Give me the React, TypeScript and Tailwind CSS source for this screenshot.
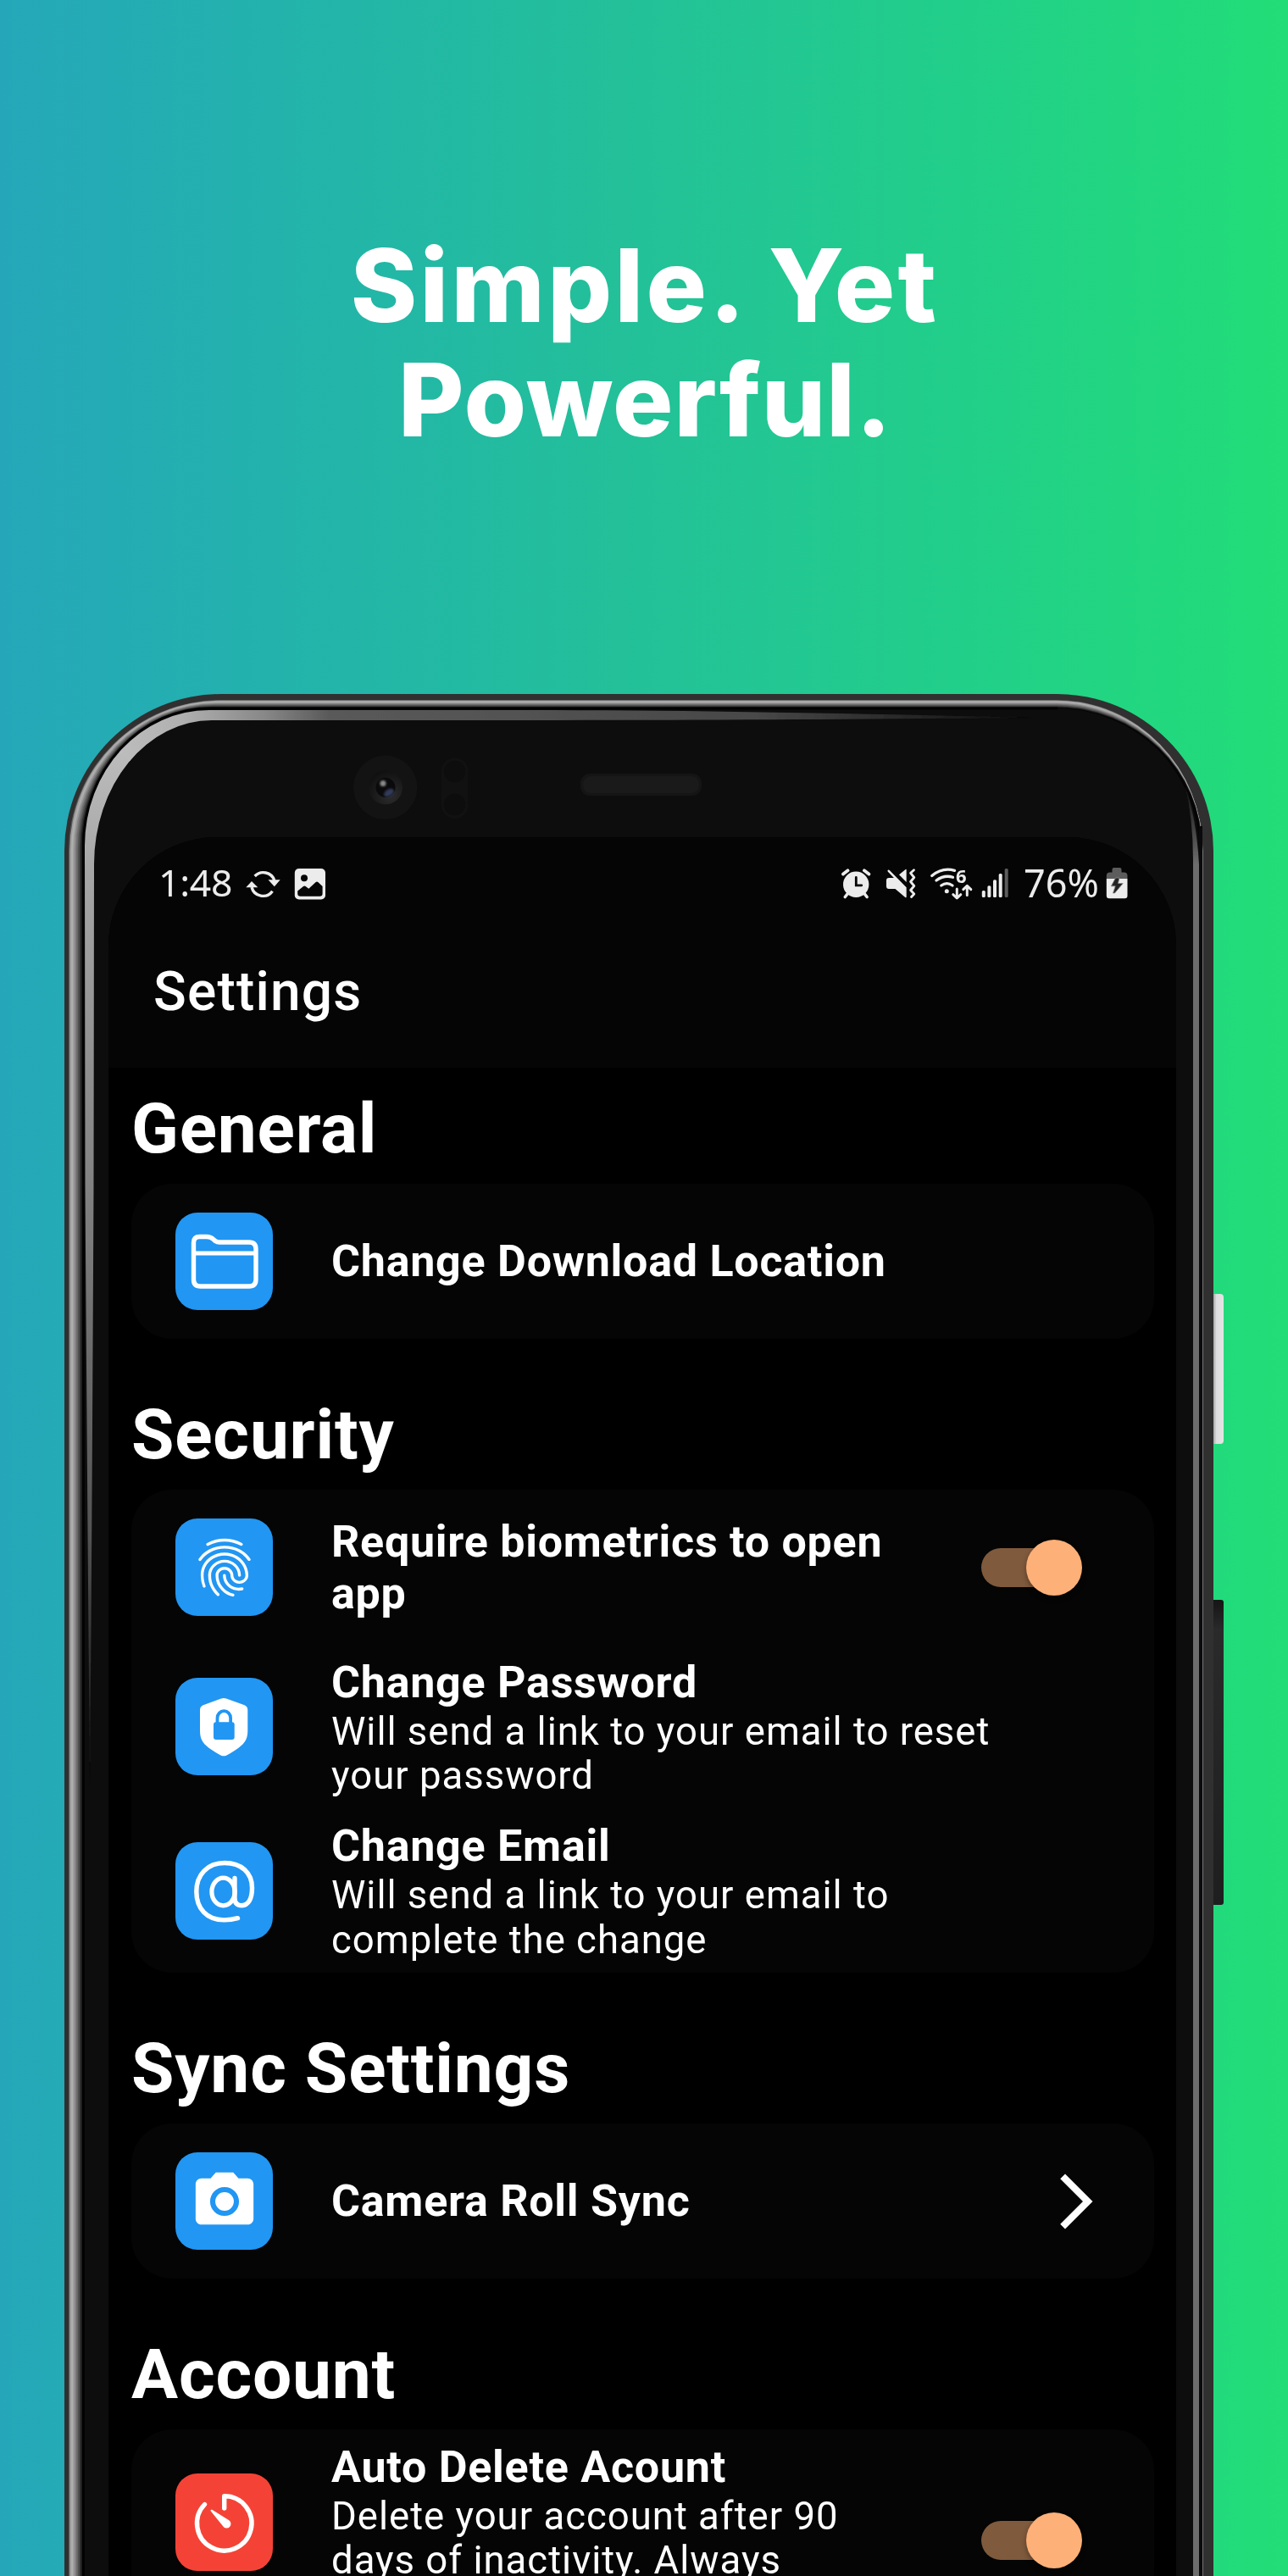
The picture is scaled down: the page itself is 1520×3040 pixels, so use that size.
import type { ReactNode } from "react";
import { MdArrowForwardIos, MdCameraAlt, MdFingerprint } from "react-icons/md";

/* ---------- Device body ---------- */

function framePath(left: number, top: number, right: number, cxL = 261, cy = 1004) {
  const cxR = 1247;
  return `M${left} 3060 V${cy} A${cxL - left} ${cy - top} 0 0 1 ${cxL} ${top} H${cxR} A${right - cxR} ${cy - top} 0 0 1 ${right} ${cy} V3060 Z`;
}

const rimStops: { t: number; c: string }[] = [
  { t: 0, c: "#5c5c5c" },
  { t: 0.08, c: "#a0a0a0" },
  { t: 0.2, c: "#b0b0b0" },
  { t: 0.32, c: "#9c9c9c" },
  { t: 0.44, c: "#848484" },
  { t: 0.56, c: "#6c6c6c" },
  { t: 0.68, c: "#525252" },
  { t: 0.8, c: "#363636" },
  { t: 0.9, c: "#1c1c1c" },
  { t: 1, c: "#050505" },
];

const reflection =
  "M106 2110 Q102.500 1700 100.500 1400 L100 998 A147 160 0 0 1 247 838 H620 C820 838 1000 842 1220 847 C1000 849 850 850 620 850 H250 A139 170 0 0 0 111 1020 L110.500 1400 Q108 1900 106 2110 Z";

function DeviceBody() {
  return (
    <svg className="pointer-events-none absolute left-0 top-0" width="1356" height="2221" viewBox="76 819 1356 2221" fill="none">
      <defs>
        <linearGradient id="sideGlow" gradientUnits="userSpaceOnUse" x1="0" y1="880" x2="0" y2="2110">
          <stop offset="0" stopColor="#bdbdbd" />
          <stop offset="0.12" stopColor="#a6a6a6" />
          <stop offset="0.4" stopColor="#858585" />
          <stop offset="0.75" stopColor="#555" />
          <stop offset="1" stopColor="#0d0d0d" />
        </linearGradient>
        <linearGradient id="topGlow" gradientUnits="userSpaceOnUse" x1="140" y1="0" x2="1215" y2="0">
          <stop offset="0" stopColor="#bdbdbd" />
          <stop offset="0.07" stopColor="#b0b0b0" />
          <stop offset="0.16" stopColor="#888" />
          <stop offset="0.23" stopColor="#5a5a5a" />
          <stop offset="0.7" stopColor="#484848" />
          <stop offset="1" stopColor="#0d0d0d" />
        </linearGradient>
        <linearGradient id="rightGlow" gradientUnits="userSpaceOnUse" x1="0" y1="925" x2="0" y2="1020">
          <stop offset="0" stopColor="#0d0d0d" />
          <stop offset="1" stopColor="#6d6d6d" />
        </linearGradient>
        <clipPath id="topPart">
          <path d="M74 819 L250 995 H1300 V819 Z" />
        </clipPath>
        <clipPath id="sidePart">
          <path d="M74 817.500 L252 995.500 V3060 H74 Z" />
        </clipPath>
        <radialGradient id="lensRing" cx="0.65" cy="0.75" r="0.8">
          <stop offset="0" stopColor="#2c2c2c" />
          <stop offset="1" stopColor="#0f0f0f" />
        </radialGradient>
        <filter id="soft" x="-0.5" y="-0.5" width="2" height="2">
          <feGaussianBlur stdDeviation="1.2" />
        </filter>
        <filter id="edge" x="-0.1" y="-0.1" width="1.2" height="1.2">
          <feGaussianBlur stdDeviation="0.6" />
        </filter>
      </defs>

      <path d={framePath(76, 819, 1432)} fill="#303030" />
      {rimStops.map(({ t, c }) => (
        <path key={t} d={framePath(81 + 16 * t, 826 + 9 * t, 1419.5 - 1.5 * t, 261 - 13 * t, 1004 - 4 * t)} fill={c} />
      ))}
      <path d="M98.500 3060 V999 A149 163 0 0 1 247.500 836 H1248 A167 166 0 0 1 1415 1002 V3060 Z" fill="#0d0d0d" />
      <path d="M98.500 3060 V999 A149 163 0 0 1 247.500 836 H1248" stroke="#020202" strokeWidth="3" />

      <g filter="url(#edge)">
        <g clipPath="url(#sidePart)">
          <path d={reflection} fill="url(#sideGlow)" />
        </g>
        <g clipPath="url(#topPart)">
          <path d={reflection} fill="url(#topGlow)" />
        </g>
        <path d="M1398 925 Q1412 965 1415 1020 V3060 H1408 V1015 Q1408 965 1398 925 Z" fill="url(#rightGlow)" />
      </g>
      <path d="M1417 975 V3060" stroke="#0a0a0c" strokeWidth="4" />

      <circle cx="454.700" cy="929.300" r="37.700" fill="#131313" />
      <circle cx="455" cy="929.300" r="20" fill="url(#lensRing)" />
      <circle cx="455" cy="929.300" r="11.500" fill="#0a0a0c" />
      <ellipse cx="459" cy="935.500" rx="6.500" ry="4" transform="rotate(-32 459 935.500)" fill="#323b58" filter="url(#soft)" />
      <circle cx="452" cy="924.500" r="3.500" fill="#8a8a8a" filter="url(#soft)" />

      <rect x="520.700" y="894.300" width="32" height="71.700" rx="16" fill="#111" />
      <circle cx="536.700" cy="910.500" r="12.700" fill="#0d0d0d" />
      <circle cx="536.700" cy="949.500" r="12.700" fill="#0d0d0d" />
      <rect x="685" y="913" width="143" height="26" rx="11" fill="#151515" />
      <rect x="688" y="916" width="137" height="20" rx="9" fill="#1a1a1a" />
    </svg>
  );
}

/* ---------- Status bar ---------- */

const ink = "#ececec";

function SyncIcon() {
  return (
    <svg className="shrink-0" width="44" height="40" viewBox="288 1023 44 40" fill="none">
      <path d="M300.700 1034 A13.800 13.800 0 0 1 323.800 1039" stroke={ink} strokeWidth="3.400" />
      <path d="M316.500 1038.300 H330.700 L323.800 1046.200 Z" fill={ink} />
      <path d="M321.500 1051.700 A13.800 13.800 0 0 1 297 1047" stroke={ink} strokeWidth="3.400" />
      <path d="M290.300 1047.300 H304.300 L297 1040 Z" fill={ink} />
    </svg>
  );
}

function PictureIcon() {
  return (
    <svg className="ml-[15px] shrink-0" width="38" height="40" viewBox="347 1023 38 40" fill="none">
      <rect x="347.800" y="1025" width="36.200" height="36.500" rx="5" fill={ink} />
      <circle cx="359" cy="1036.300" r="4" fill="#050505" />
      <path d="M351.200 1051.600 L358 1046 Q359.500 1045 361 1046.200 L364.300 1048.800 L372.700 1041 Q374 1040.200 375.300 1041 L380.600 1046 V1054.500 Q380.600 1057.800 377.300 1057.800 H354.500 Q351.200 1057.800 351.200 1054.500 Z" fill="#050505" />
    </svg>
  );
}

function AlarmIcon() {
  return (
    <svg className="shrink-0" width="36" height="40" viewBox="992 1023 36 40" fill="none" strokeLinecap="round">
      <circle cx="1010.200" cy="1043.800" r="15.200" fill={ink} />
      <path d="M995 1031.500 L1000.500 1027.300 M1025.400 1031.500 L1019.900 1027.300" stroke={ink} strokeWidth="3.800" />
      <path d="M1000 1055 L997.300 1058.500 M1020.400 1055 L1023.100 1058.500" stroke={ink} strokeWidth="3.600" />
      <path d="M1010.300 1035.500 V1044.800 H1016.800" stroke="#050505" strokeWidth="2.800" />
    </svg>
  );
}

function MuteVibrateIcon() {
  return (
    <svg className="ml-4 shrink-0" width="38" height="40" viewBox="1044 1023 38 40" fill="none" strokeLinecap="round" strokeLinejoin="round">
      <path d="M1048.800 1027.800 L1068.500 1048" stroke={ink} strokeWidth="2.600" />
      <path d="M1061 1032.300 L1068.700 1026 Q1069.700 1025.500 1069.700 1026.800 V1041 Z" fill={ink} />
      <path d="M1046 1039 Q1046 1036 1049 1036 H1056 L1069.700 1049.300 V1058 Q1069.700 1060 1068 1058.700 L1056.500 1049 H1049 Q1046 1049 1046 1046 Z" fill={ink} />
      <path d="M1078.500 1026.700 L1074.600 1030.300 L1078.800 1035.500 L1074.600 1040.500 L1078.800 1045.500 L1074.600 1050.500 L1078.800 1055 L1075.500 1058.500" stroke={ink} strokeWidth="2.800" />
    </svg>
  );
}

function WifiIcon() {
  return (
    <div className="relative ml-4 h-[40px] w-[50px] shrink-0">
      <svg width="50" height="40" viewBox="1098 1023 50 40" fill="none" stroke={ink} strokeWidth="3.300" strokeLinecap="round" strokeLinejoin="round">
        <path d="M1099.800 1033.500 Q1112 1023.300 1126.500 1027.300" />
        <path d="M1105 1039 Q1114.500 1032 1124.500 1035.300" />
        <path d="M1110.800 1045 Q1117.500 1040.300 1124 1045" />
        <circle cx="1117.300" cy="1051.800" r="2.500" fill={ink} stroke="none" />
        <path d="M1129.300 1049 V1059.500 M1124.800 1055.700 L1129.300 1060 L1133.800 1055.700" strokeWidth="3" />
        <path d="M1141.300 1056.500 V1046 M1136.800 1049.700 L1141.300 1045.400 L1145.800 1049.700" strokeWidth="3" />
      </svg>
      <span className="absolute left-[30px] top-[-1px] font-['Noto_Sans'] text-[22px] font-bold leading-[22px] text-[#ececec]">6</span>
    </div>
  );
}

function SignalIcon() {
  return (
    <svg className="ml-[10px] shrink-0" width="32" height="40" viewBox="1158 1023 32 40">
      <rect x="1158.800" y="1051" width="4" height="8" rx="1.500" fill={ink} />
      <rect x="1165.400" y="1045.300" width="4" height="13.700" rx="1.500" fill={ink} />
      <rect x="1172" y="1038.300" width="4" height="20.700" rx="1.500" fill={ink} />
      <rect x="1178.700" y="1031" width="4" height="28" rx="1.500" fill={ink} />
      <rect x="1185.700" y="1025" width="4" height="34" rx="1.500" fill="#5c5c5c" />
    </svg>
  );
}

function BatteryIcon() {
  return (
    <svg className="ml-2 shrink-0" width="26" height="40" viewBox="1305 1023 26 40">
      <path d="M1312.500 1029.500 V1026 Q1312.500 1024 1314.500 1024 H1321.500 Q1323.500 1024 1323.500 1026 V1029.500 H1326.500 Q1330.500 1029.500 1330.500 1033.500 V1037 H1305.800 V1033.500 Q1305.800 1029.500 1309.800 1029.500 Z" fill="#5c5c5c" />
      <path d="M1305.800 1037 H1330.500 V1057 Q1330.500 1060.300 1327.200 1060.300 H1309.100 Q1305.800 1060.300 1305.800 1057 Z" fill={ink} />
      <path d="M1316.500 1036 H1321 L1319.500 1042.500 H1325.300 L1315.500 1054 H1313.500 L1316.200 1045.800 H1311.300 Z" fill="#222" stroke="#8a8a8a" strokeWidth="0.800" />
    </svg>
  );
}

function StatusBar() {
  return (
    <div className="mt-[25px] flex h-[60px] items-center pl-[59px] pr-[57px] font-['Noto_Sans'] text-[45px] leading-none text-[#ececec]">
      <span className="w-[101px] pb-[4px] text-[44.5px] tracking-[-0.3px]">1:48</span>
      <SyncIcon />
      <PictureIcon />
      <div className="ml-auto flex items-center">
        <AlarmIcon />
        <MuteVibrateIcon />
        <WifiIcon />
        <SignalIcon />
        <span className="ml-[18px] pb-[4px]">76%</span>
        <BatteryIcon />
      </div>
    </div>
  );
}

/* ---------- Row icons ---------- */

function FolderIcon() {
  return (
    <svg width="115" height="115" viewBox="0 0 115 115" fill="none" stroke="white" strokeWidth="5.400">
      <path d="M28.500 28.500 H37 Q41.500 28.500 44.500 31.300 L47 33.500 Q49.200 35 52 35 H87 Q95 35 95 43 V79 Q95 87 87 87 H29.500 Q21.500 87 21.500 79 V35.500 Q21.500 28.500 28.500 28.500 Z" />
      <path d="M21.500 48 H95" strokeWidth="4.800" />
    </svg>
  );
}

function ShieldLockIcon() {
  return (
    <svg width="115" height="115" viewBox="0 0 115 115" fill="none">
      <path d="M57 24 Q58.500 24 60 24.600 L81.500 32.200 Q85.300 33.700 85.300 38 V63 C85.300 74 80 79 72 84.500 C68 87.300 63.500 90 60 91.700 Q57 93 54 91.700 C50.500 90 46 87.300 42 84.500 C34 79 29 74 29 63 V38 Q29 33.700 32.800 32.200 L54 24.600 Q55.500 24 57 24 Z" fill="white" />
      <rect x="45" y="52.300" width="24.700" height="20.800" rx="3" fill="#2196f3" />
      <path d="M49.500 54 V47.500 A7.800 8.300 0 0 1 65.100 47.500 V54" stroke="#2196f3" strokeWidth="3.800" />
    </svg>
  );
}

function AtIcon() {
  return (
    <svg width="115" height="115" viewBox="0 0 115 115" fill="none" stroke="white" strokeWidth="5.400" strokeLinecap="round">
      <path d="M73.500 89.700 C68 91.300 62 91.900 57.500 91.900 C37 91.900 24.800 78.500 24.800 58.300 C24.800 38 38 24.500 58 24.500 C78 24.500 90.500 36 90.500 54 C90.500 67 86 74.700 78.500 74.700 C73 74.700 70 72 70 66 V42.500" />
      <ellipse cx="56.500" cy="58.500" rx="13.600" ry="16.300" strokeWidth="5.200" />
    </svg>
  );
}

function TimerIcon() {
  return (
    <svg width="115" height="115" viewBox="0 0 115 115" fill="none">
      <path d="M57.700 41 V26.600 A32.200 32.200 0 1 1 34.500 36.500" stroke="white" strokeWidth="5.400" strokeLinecap="round" strokeLinejoin="round" />
      <path d="M43.300 42.800 L63.300 55.200 A4.900 4.900 0 0 1 57.200 63.600 L41.800 44.600 A1.200 1.200 0 0 1 43.300 42.800 Z" fill="white" />
    </svg>
  );
}

/* ---------- Settings list ---------- */

function Tile({ children, danger = false }: { children: ReactNode; danger?: boolean }) {
  return (
    <div className={`flex size-[115px] shrink-0 items-center justify-center rounded-[26px] text-white ${danger ? "bg-[#f44336]" : "bg-[#2196f3]"}`}>
      {children}
    </div>
  );
}

function Toggle() {
  return (
    <div className="relative flex h-[66px] w-[119px] shrink-0 items-center">
      <div className="h-[46px] w-[108px] rounded-full bg-[#7f5a3d]" />
      <div className="absolute right-0 top-0 size-[66px] rounded-full bg-[#fdb078] shadow-[0_3px_6px_rgba(0,0,0,0.35)]" />
    </div>
  );
}

function RowTitle({ children }: { children: ReactNode }) {
  return <div className="text-[52px] font-bold leading-[61px] tracking-[0.75px]">{children}</div>;
}

function RowNote({ children }: { children: ReactNode }) {
  return <div className="mt-[2px] text-[45.5px] leading-[52.3px] tracking-[1px]">{children}</div>;
}

function Section({ title, children, first = false }: { title: string; children: ReactNode; first?: boolean }) {
  return (
    <section className={first ? "mt-6" : "mt-[65px]"}>
      <h2 className="mb-[17px] text-[82px] font-bold leading-[96px] tracking-[0.8px]">{title}</h2>
      <div className="rounded-[48px] bg-[#050505]">{children}</div>
    </section>
  );
}

function Row({ icon, children, trailing, tall = false }: { icon: ReactNode; children: ReactNode; trailing?: ReactNode; tall?: boolean }) {
  return (
    <div className={`flex items-center pl-[52px] pr-[85px] ${tall ? "h-[193.500px]" : "h-[183px]"}`}>
      {icon}
      <div className={`ml-[69px] min-w-0 flex-1 ${tall ? "pt-[2px]" : ""}`}>{children}</div>
      {trailing}
    </div>
  );
}

export default function App() {
  return (
    <div className="h-[3040px] w-[1520px] overflow-hidden bg-linear-to-r from-[#25a7b9] via-[#23c198] to-[#22dd77] font-['Roboto',sans-serif] text-white">
      <h1 className="h-[819px] pt-[270px] text-center font-['Inter',sans-serif] text-[119px] font-extrabold leading-[135.3px]">
        <span className="block pl-[2px] tracking-[3.3px]">Simple. Yet</span>
        <span className="block pl-[3px] tracking-[1px]">Powerful.</span>
      </h1>

      <div className="relative ml-[76px] h-[2221px] w-[1356px]">
        <div className="absolute left-full top-[708px] h-[177px] w-[12px] rounded-r-[4px] bg-linear-to-r from-[#a8a8a8] via-[#dedede] via-30% to-[#e4e4e4]" />
        <div className="absolute left-full top-[1069px] h-[360px] w-[12px] rounded-r-[3px] bg-linear-to-b from-[#151515] via-[#2a2a2a] via-10% to-[#1e1e1e]" />
        <DeviceBody />

        <div className="relative h-full pl-[52px] pt-[169px]">
          <div className="h-[2052px] w-[1260px] overflow-hidden rounded-t-[128px] bg-black">
            <header className="flex h-[272px] flex-col bg-[#050505]">
              <StatusBar />
              <div className="mt-[60px] pl-[53px] text-[64px] font-medium leading-[75px] tracking-[1.2px]">Settings</div>
            </header>

            <main className="pl-[27px] pr-[26px]">
              <Section title="General" first>
                <Row icon={<Tile><FolderIcon /></Tile>}>
                  <RowTitle>Change Download Location</RowTitle>
                </Row>
              </Section>

              <Section title="Security">
                <Row icon={<Tile><MdFingerprint size={82} /></Tile>} trailing={<Toggle />}>
                  <RowTitle>
                    Require biometrics to open
                    <br />
                    app
                  </RowTitle>
                </Row>
                <Row tall icon={<Tile><ShieldLockIcon /></Tile>}>
                  <RowTitle>Change Password</RowTitle>
                  <RowNote>
                    Will send a link to your email to reset
                    <br />
                    your password
                  </RowNote>
                </Row>
                <Row tall icon={<Tile><AtIcon /></Tile>}>
                  <RowTitle>Change Email</RowTitle>
                  <RowNote>
                    Will send a link to your email to
                    <br />
                    complete the change
                  </RowNote>
                </Row>
              </Section>

              <Section title="Sync Settings">
                <Row
                  icon={<Tile><MdCameraAlt size={82} /></Tile>}
                  trailing={<MdArrowForwardIos className="-mr-[32px] shrink-0" size={78} />}
                >
                  <RowTitle>Camera Roll Sync</RowTitle>
                </Row>
              </Section>

              <Section title="Account">
                <div className="flex h-[219px] items-start pl-[52px] pr-[85px]">
                  <div className="mt-[52px]">
                    <Tile danger>
                      <TimerIcon />
                    </Tile>
                  </div>
                  <div className="ml-[69px] mt-[14px] min-w-0 flex-1">
                    <RowTitle>Auto Delete Acount</RowTitle>
                    <RowNote>
                      Delete your account after 90
                      <br />
                      days of inactivity. Always
                    </RowNote>
                  </div>
                  <div className="mt-[98px]">
                    <Toggle />
                  </div>
                </div>
              </Section>
            </main>
          </div>
        </div>
      </div>
    </div>
  );
}
